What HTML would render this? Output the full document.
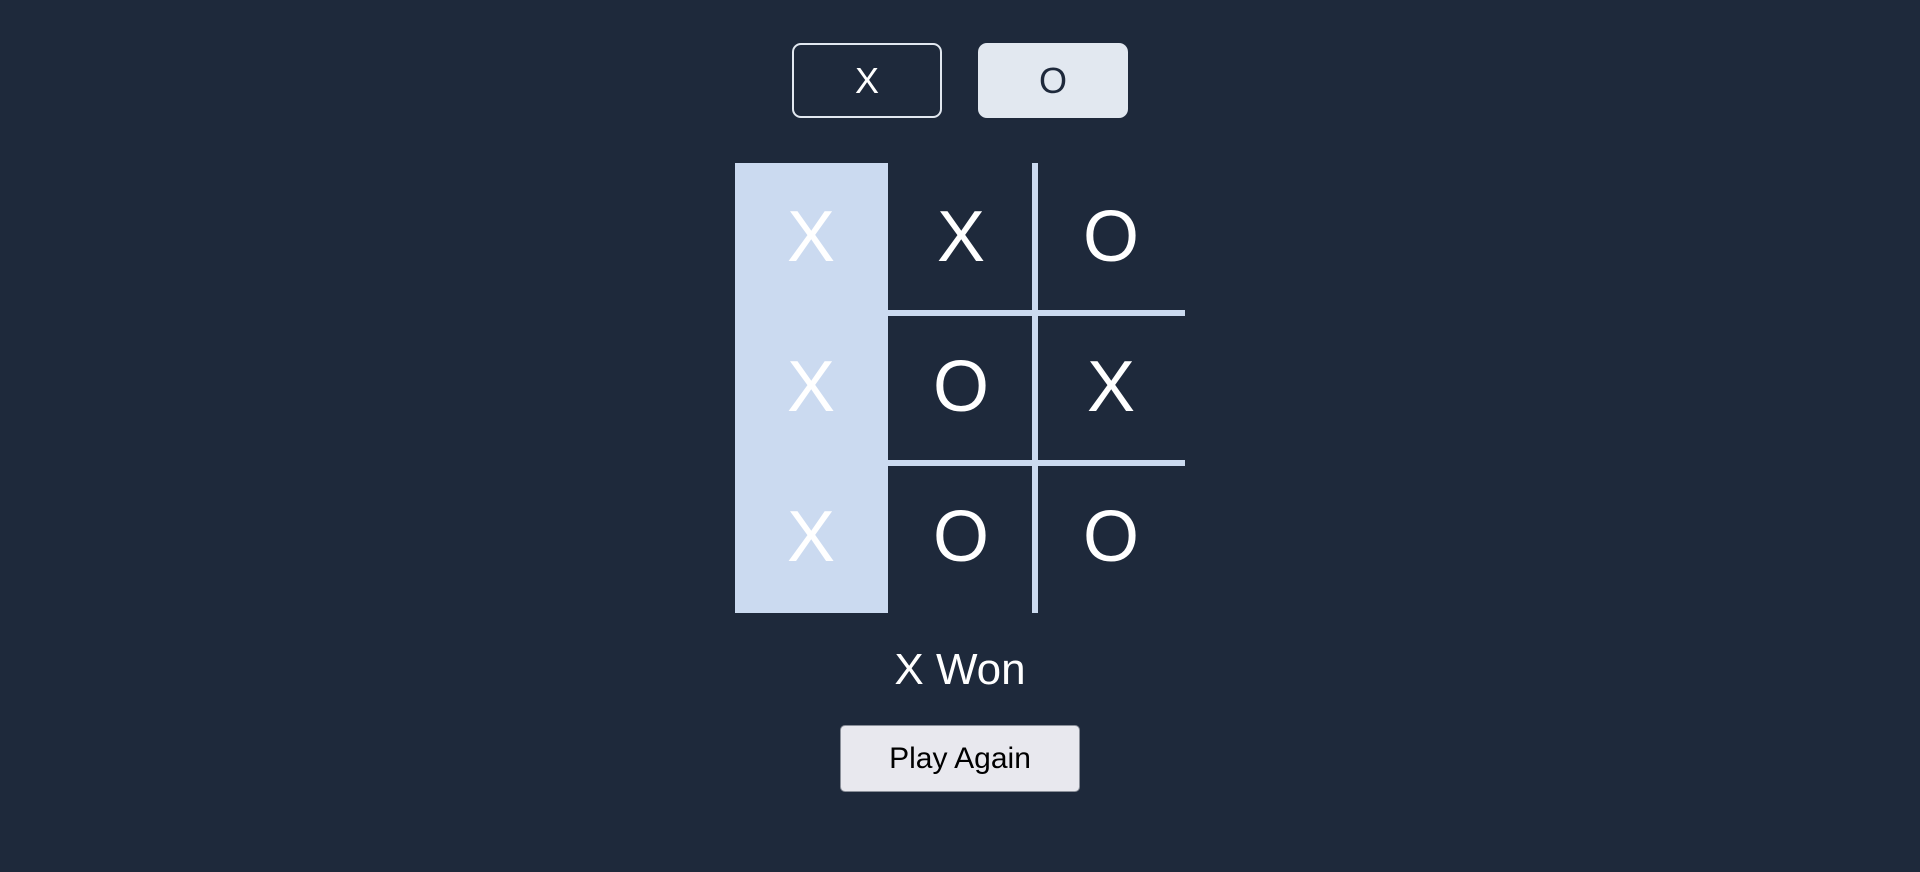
<!DOCTYPE html>
<html><head><meta charset="utf-8"><style>
html,body{margin:0;padding:0;background:#1e293b;width:1920px;height:872px;overflow:hidden;font-family:"Liberation Sans",sans-serif;}
.btn{position:absolute;top:43px;width:150px;height:75px;box-sizing:border-box;border-radius:9px;display:flex;align-items:center;justify-content:center;font-size:36px;}
#bx{left:792px;border:2px solid #e2e8f0;color:#fff;}
#bo{left:978px;background:#e2e8f0;color:#1e293b;}
.hl{position:absolute;left:735px;top:163px;width:153px;height:450px;background:#cbdaf0;}
.vl{position:absolute;left:1032px;top:163px;width:6px;height:450px;background:#cbdaf0;}
.hz{position:absolute;left:888px;width:297px;height:6px;background:#cbdaf0;}
.c{position:absolute;width:150px;height:150px;display:flex;align-items:center;justify-content:center;color:#fff;font-size:72px;line-height:1;}
#won{position:absolute;left:0;width:1920px;top:645px;text-align:center;color:#fff;font-size:44px;}
#pa{position:absolute;left:840px;top:725px;width:240px;height:67px;box-sizing:border-box;background:#e8e8ee;border:1px solid #8a8f99;border-radius:5px;display:flex;align-items:center;justify-content:center;font-size:30px;color:#000;}
</style></head><body>
<div class="btn" id="bx">X</div>
<div class="btn" id="bo">O</div>
<div class="hl"></div>
<div class="vl"></div>
<div class="hz" style="top:310px"></div>
<div class="hz" style="top:460px"></div>
<div class="c" style="left:736px;top:162px">X</div>
<div class="c" style="left:886px;top:162px">X</div>
<div class="c" style="left:1036px;top:162px">O</div>
<div class="c" style="left:736px;top:312px">X</div>
<div class="c" style="left:886px;top:312px">O</div>
<div class="c" style="left:1036px;top:312px">X</div>
<div class="c" style="left:736px;top:462px">X</div>
<div class="c" style="left:886px;top:462px">O</div>
<div class="c" style="left:1036px;top:462px">O</div>
<div id="won">X Won</div>
<div id="pa">Play Again</div>
</body></html>
